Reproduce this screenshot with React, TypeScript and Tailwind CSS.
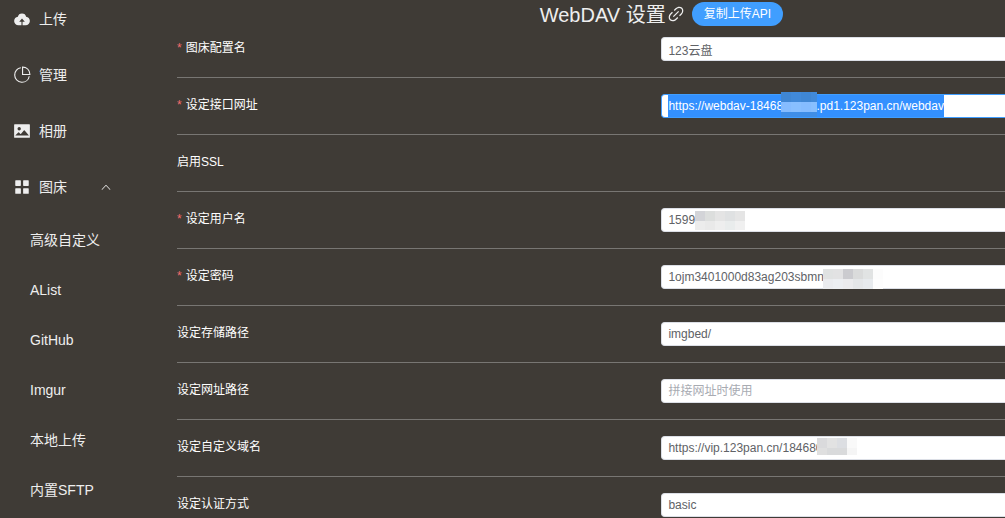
import { useEffect, useRef, type ReactNode } from "react";

const ICONS = {
  upload: [
    "M544 864V672h128L512 480 352 672h128v192H320v-1.6c-5.376.32-10.496 1.6-16 1.6A240 240 0 0 1 64 624c0-123.136 93.12-223.488 212.608-237.248A239.808 239.808 0 0 1 512 192a239.872 239.872 0 0 1 235.456 194.752c119.488 13.76 212.48 114.112 212.48 237.248a240 240 0 0 1-240 240c-5.376 0-10.56-1.28-16-1.6v1.6H544z",
  ],
  pie: [
    "M448 68.48v64.832A384.128 384.128 0 0 0 512 896a384.128 384.128 0 0 0 378.688-320h64.768A448.128 448.128 0 0 1 64 512 448.128 448.128 0 0 1 448 68.48z",
    "M576 97.28V448h350.72A384.064 384.064 0 0 0 576 97.28zM512 64V33.152A448 448 0 0 1 990.848 512H512V64z",
  ],
  picture: [
    "M96 896a32 32 0 0 1-32-32V160a32 32 0 0 1 32-32h832a32 32 0 0 1 32 32v704a32 32 0 0 1-32 32H96zm315.52-228.48-68.928-68.928a32 32 0 0 0-45.248 0L128 768.064h778.688l-242.112-290.56a32 32 0 0 0-49.216 0L458.752 665.408a32 32 0 0 1-47.232 2.112zM256 384a96 96 0 1 0 192.064-.064A96 96 0 0 0 256 384z",
  ],
  menu: [
    "M160 448a32 32 0 0 1-32-32V160.064a32 32 0 0 1 32-32h256a32 32 0 0 1 32 32V416a32 32 0 0 1-32 32H160zm448 0a32 32 0 0 1-32-32V160.064a32 32 0 0 1 32-32h255.936a32 32 0 0 1 32 32V416a32 32 0 0 1-32 32H608zM160 896a32 32 0 0 1-32-32V608a32 32 0 0 1 32-32h256a32 32 0 0 1 32 32v256a32 32 0 0 1-32 32H160zm448 0a32 32 0 0 1-32-32V608a32 32 0 0 1 32-32h255.936a32 32 0 0 1 32 32v256a32 32 0 0 1-32 32H608z",
  ],
  arrowUp: [
    "m488.832 344.32-339.84 356.672a32 32 0 0 0 0 44.16l.384.384a29.44 29.44 0 0 0 42.688 0l320-335.872 319.872 335.872a29.44 29.44 0 0 0 42.688 0l.384-.384a32 32 0 0 0 0-44.16L535.168 344.32a32 32 0 0 0-46.336 0z",
  ],
  link: [
    "M715.648 625.152 670.4 579.904l90.496-90.56c75.008-74.944 85.12-186.368 22.656-248.896-62.528-62.464-173.952-52.352-248.96 22.656L444.16 353.6l-45.248-45.248 90.496-90.496c100.032-99.968 251.968-110.08 339.456-22.656 87.488 87.488 77.312 239.424-22.656 339.456l-90.496 90.496zm-90.496 90.496-90.496 90.496C434.624 906.112 282.688 916.224 195.2 828.8c-87.488-87.488-77.312-239.424 22.656-339.456l90.496-90.496 45.248 45.248-90.496 90.56c-75.008 74.944-85.12 186.368-22.656 248.896 62.528 62.464 173.952 52.352 248.96-22.656l90.496-90.496 45.248 45.248zm0-362.048 45.248 45.248L398.848 670.4 353.6 625.152 625.152 353.6z",
  ],
};

function Icon({ name, className }: { name: keyof typeof ICONS; className: string }) {
  return (
    <svg viewBox="0 0 1024 1024" fill="currentColor" aria-hidden="true" className={className}>
      {ICONS[name].map((d) => (
        <path key={d} d={d} />
      ))}
    </svg>
  );
}

const mainLinks: { icon: keyof typeof ICONS; label: string }[] = [
  { icon: "upload", label: "上传" },
  { icon: "pie", label: "管理" },
  { icon: "picture", label: "相册" },
];

const hosts = ["高级自定义", "AList", "GitHub", "Imgur", "本地上传", "内置SFTP"];

function Sidebar() {
  return (
    <nav className="-mt-[9px] w-[177px] shrink-0 text-sm text-[#eeeeee]">
      {mainLinks.map((item) => (
        <a key={item.label} href="#" className="flex h-14 items-center gap-2 pl-[13px]">
          <Icon name={item.icon} className="size-[18px]" />
          {item.label}
        </a>
      ))}
      <button type="button" aria-expanded="true" className="flex h-14 w-full items-center gap-2 pl-[13px]">
        <Icon name="menu" className="size-[18px]" />
        图床
        <Icon name="arrowUp" className="ml-[25px] size-3" />
      </button>
      {hosts.map((host) => (
        <a key={host} href="#" className="flex h-[50px] items-center pl-[30px]">
          {host}
        </a>
      ))}
    </nav>
  );
}

/** Pixelated patch that hides private characters of a value. */
function Mosaic({ className, rows }: { className: string; rows: string[][] }) {
  return (
    <div aria-hidden="true" className={`absolute flex flex-col overflow-hidden ${className}`}>
      {rows.map((row, y) => (
        <div key={y} className="flex h-[10px] shrink-0">
          {row.map((color, x) => (
            <span key={x} className="w-[10px] shrink-0" style={{ backgroundColor: color }} />
          ))}
        </div>
      ))}
    </div>
  );
}

const fieldClass =
  "block h-6 w-full rounded-l-[4px] border border-r-0 border-[#dcdfe6] bg-white px-[6px] text-xs leading-[22px] text-[#606266] outline-none placeholder:text-[#a8abb2] selection:bg-[#3390ff] selection:text-white focus:border-[#409eff]";

const selectedClass =
  "bg-no-repeat bg-[length:276px_22px] bg-[position:6px_0px] focus:bg-[image:linear-gradient(#3390ff,#3390ff)]";

function Row({ id, label, required, children }: { id: string; label: string; required?: boolean; children?: ReactNode }) {
  return (
    <div className="flex h-[57px] items-start border-b border-[#787673] pt-4 last:border-b-0">
      <label htmlFor={id} className="w-[58.5%] shrink-0 text-xs leading-[22px] text-white">
        {required && <span className="mr-1 text-[#f56c6c]">*</span>}
        {label}
      </label>
      <div className="relative min-w-0 flex-1">{children}</div>
    </div>
  );
}

export default function App() {
  const urlRef = useRef<HTMLInputElement>(null);

  useEffect(() => {
    urlRef.current?.focus();
    urlRef.current?.select();
  }, []);

  return (
    <div className="flex h-screen overflow-hidden bg-[#3f3b36] font-['Liberation_Sans','Noto_Sans_CJK_SC',sans-serif]">
      <Sidebar />
      <main className="min-w-0 flex-1 overflow-hidden">
        <header className="flex h-[21px] w-[117%] items-start justify-center">
          <h1 className="flex items-start text-xl leading-[30px] text-[#eeeeee]">
            WebDAV 设置
            <Icon name="link" className="mt-1 size-5" />
          </h1>
          <button type="button" className="mt-[2px] ml-[6px] h-6 rounded-full bg-[#409eff] px-3 text-xs leading-6 text-white">
            复制上传API
          </button>
        </header>
        <form>
          <Row id="name" label="图床配置名" required>
            <input id="name" className={fieldClass} defaultValue="123云盘" />
          </Row>
          <Row id="url" label="设定接口网址" required>
            <input
              id="url"
              ref={urlRef}
              className={`${fieldClass} ${selectedClass}`}
              defaultValue="https://webdav-1846800000.pd1.123pan.cn/webdav"
            />
            <Mosaic
              className="-top-[2px] left-[120px] h-[25px] w-9"
              rows={[
                ["#3f86d3", "#4189d8", "#3f86d3", "#4189d8"],
                ["#85bcff", "#88bfff", "#85bcff", "#88bfff"],
                ["#3f8ee8", "#3f8ee8", "#3f8ee8", "#3f8ee8"],
              ]}
            />
          </Row>
          <Row id="ssl" label="启用SSL" />
          <Row id="user" label="设定用户名" required>
            <input id="user" className={fieldClass} defaultValue="1599" />
            <Mosaic
              className="top-[3px] left-[34px] h-[19px] w-[50px]"
              rows={[
                ["#d3d4d8", "#dcdedd", "#e4e4e4", "#dfe1e2", "#e5e5e5"],
                ["#ececec", "#e9e9e9", "#eeeeee", "#e9ecec", "#f0f0f0"],
              ]}
            />
          </Row>
          <Row id="password" label="设定密码" required>
            <input id="password" className={fieldClass} defaultValue="1ojm3401000d83ag203sbmn" />
            <Mosaic
              className="top-1 left-[162px] h-5 w-[60px]"
              rows={[
                ["#e0e2e2", "#e2e2e3", "#cbcbcf", "#dadbdb", "#e1e3e3", "#fcfcfc"],
                ["#eaebee", "#eceef1", "#ebebed", "#e4e6e8", "#e7eaed", "#fdfdfd"],
              ]}
            />
          </Row>
          <Row id="storage" label="设定存储路径">
            <input id="storage" className={fieldClass} defaultValue="imgbed/" />
          </Row>
          <Row id="path" label="设定网址路径">
            <input id="path" className={fieldClass} placeholder="拼接网址时使用" />
          </Row>
          <Row id="domain" label="设定自定义域名">
            <input id="domain" className={fieldClass} defaultValue="https://vip.123pan.cn/184680" />
            <Mosaic
              className="top-[2px] left-[156px] h-[17px] w-10"
              rows={[
                ["#dadadc", "#e2e2e2", "#dcdee2", "#f9f9f9"],
                ["#dfdfdf", "#d9dadb", "#d9dadb", "#f5f5f5"],
              ]}
            />
          </Row>
          <Row id="auth" label="设定认证方式">
            <select id="auth" className={`${fieldClass} appearance-none`} defaultValue="basic">
              <option value="basic">basic</option>
            </select>
          </Row>
        </form>
      </main>
    </div>
  );
}
